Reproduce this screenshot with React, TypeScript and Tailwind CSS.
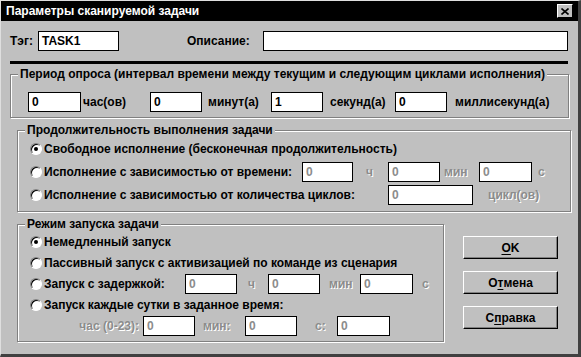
import type { ReactNode } from 'react'

const Field = ({ value = '', className = '', disabled = false }: { value?: string; className?: string; disabled?: boolean }) => (
  <div className={`h-[20px] shrink-0 bg-white border border-black pl-[3px] leading-[18px] ${disabled ? 'text-[#8c8c8c]' : 'text-black'} ${className}`}>
    {value}
  </div>
)

const Dim = ({ children, className = '' }: { children: ReactNode; className?: string }) => (
  <span className={`shrink-0 text-[#8c8c8c] [text-shadow:1px_1px_0_#fff] ${className}`}>{children}</span>
)

const Radio = ({ checked = false }: { checked?: boolean }) => (
  <div className="w-[12px] h-[12px] shrink-0 rounded-full bg-white border border-t-[#808080] border-l-[#808080] border-r-white border-b-white shadow-[inset_1px_1px_0_#000] flex items-center justify-center mr-[2px]">
    {checked && <div className="w-[4px] h-[4px] rounded-full bg-black" />}
  </div>
)

const Group = ({ title, className = '', children }: { title: string; className?: string; children: ReactNode }) => (
  <fieldset className={`border border-[#808080] shadow-[1px_1px_0_#fff,inset_1px_1px_0_#fff] ${className}`}>
    <legend className="ml-[7px] px-[2px] bg-[#c0c0c0] leading-[14px]">{title}</legend>
    {children}
  </fieldset>
)

const Button = ({ children }: { children: ReactNode }) => (
  <button className="w-[95px] h-[23px] bg-[#c0c0c0] border border-t-white border-l-white border-r-black border-b-black shadow-[inset_-1px_-1px_0_#808080] flex items-center justify-center font-bold text-[12px]">
    {children}
  </button>
)

export default function App() {
  return (
    <div className="w-[581px] h-[357px] bg-[#c0c0c0] font-['Liberation_Sans',Arial,sans-serif] font-bold text-[12px] text-black border-l border-t border-l-[#dfdfdf] border-t-[#dfdfdf] border-r-[3px] border-b-[3px] border-r-[#404040] border-b-[#404040] flex flex-col overflow-hidden">
      {/* title bar */}
      <div className="h-[20px] shrink-0 bg-black flex items-center justify-between pl-[5px] pr-[5px]">
        <span className="text-white text-[12px]">Параметры сканируемой задачи</span>
        <div className="w-[16px] h-[14px] bg-[#c0c0c0] border border-t-white border-l-white border-r-black border-b-black flex items-center justify-center">
          <svg width="8" height="7" viewBox="0 0 8 7">
            <path d="M0.5 0.5 L7.5 6.5 M7.5 0.5 L0.5 6.5" stroke="#000" strokeWidth="1.6" />
          </svg>
        </div>
      </div>

      {/* tag / description */}
      <div className="flex items-center mt-[10px] pl-[9px]">
        <span className="w-[28px]">Тэг:</span>
        <Field value="TASK1" className="w-[81px]" />
        <span className="ml-[68px] w-[76px]">Описание:</span>
        <Field className="w-[305px]" />
      </div>

      <div className="h-[3px] w-[558px] bg-black ml-[9px] mt-[10px]" />

      {/* polling period */}
      <Group title="Период опроса (интервал времени между текущим и следующим циклами исполнения)" className="ml-[9px] w-[559px] mt-[3px]">
        <div className="flex items-center pl-[17px] pt-[11px] pb-[5px]">
          <Field value="0" className="w-[53px]" />
          <span className="w-[69px] pl-[2px]">час(ов)</span>
          <Field value="0" className="w-[52px]" />
          <span className="w-[69px] pl-[6px]">минут(а)</span>
          <Field value="1" className="w-[52px]" />
          <span className="w-[72px] pl-[7px]">секунд(а)</span>
          <Field value="0" className="w-[52px]" />
          <span className="pl-[8px]">миллисекунд(а)</span>
        </div>
      </Group>

      {/* duration */}
      <Group title="Продолжительность выполнения задачи" className="ml-[16px] w-[554px] mt-[5px]">
        <div className="flex flex-col pl-[12px] pb-[5px]">
          <div className="h-[23px] flex items-center">
            <Radio checked />
            <span>Свободное исполнение (бесконечная продолжительность)</span>
          </div>
          <div className="h-[23px] flex items-center">
            <Radio />
            <span className="w-[258px] shrink-0">Исполнение с зависимостью от времени:</span>
            <Field value="0" disabled className="w-[51px]" />
            <Dim className="w-[35px] pl-[13px]">ч</Dim>
            <Field value="0" disabled className="w-[52px]" />
            <Dim className="w-[39px] pl-[4px]">мин</Dim>
            <Field value="0" disabled className="w-[53px]" />
            <Dim className="pl-[6px]">с</Dim>
          </div>
          <div className="h-[23px] flex items-center">
            <Radio />
            <span className="w-[344px] shrink-0">Исполнение с зависимостью от количества циклов:</span>
            <Field value="0" disabled className="w-[85px] h-[18px]" />
            <Dim className="pl-[15px]">цикл(ов)</Dim>
          </div>
        </div>
      </Group>

      {/* start mode + buttons */}
      <div className="flex mt-[5px]">
        <Group title="Режим запуска задачи" className="ml-[16px] w-[427px]">
          <div className="flex flex-col pl-[12px] pb-[5px]">
            <div className="h-[21px] flex items-center">
              <Radio checked />
              <span>Немедленный запуск</span>
            </div>
            <div className="h-[21px] flex items-center">
              <Radio />
              <span>Пассивный запуск с активизацией по команде из сценария</span>
            </div>
            <div className="h-[21px] flex items-center">
              <Radio />
              <span className="w-[141px] shrink-0">Запуск с задержкой:</span>
              <Field value="0" disabled className="w-[52px]" />
              <Dim className="w-[31px] pl-[11px]">ч</Dim>
              <Field value="0" disabled className="w-[52px]" />
              <Dim className="w-[40px] pl-[9px]">мин</Dim>
              <Field value="0" disabled className="w-[53px]" />
              <Dim className="pl-[9px]">с</Dim>
            </div>
            <div className="h-[21px] flex items-center">
              <Radio />
              <span>Запуск каждые сутки в заданное время:</span>
            </div>
            <div className="h-[21px] flex items-center">
              <Dim className="w-[113px] text-right pr-[4px]">час (0-23):</Dim>
              <Field value="0" disabled className="w-[52px]" />
              <Dim className="w-[50px] pl-[8px]">мин:</Dim>
              <Field value="0" disabled className="w-[52px]" />
              <Dim className="w-[40px] pl-[18px]">с:</Dim>
              <Field value="0" disabled className="w-[53px]" />
            </div>
          </div>
        </Group>

        <div className="flex flex-col gap-[12px] ml-[19px] mt-[19px]">
          <Button><span className="underline underline-offset-2">О</span>K</Button>
          <Button>О<span className="underline underline-offset-2">т</span>мена</Button>
          <Button>С<span className="underline underline-offset-2">п</span>равка</Button>
        </div>
      </div>
    </div>
  )
}
